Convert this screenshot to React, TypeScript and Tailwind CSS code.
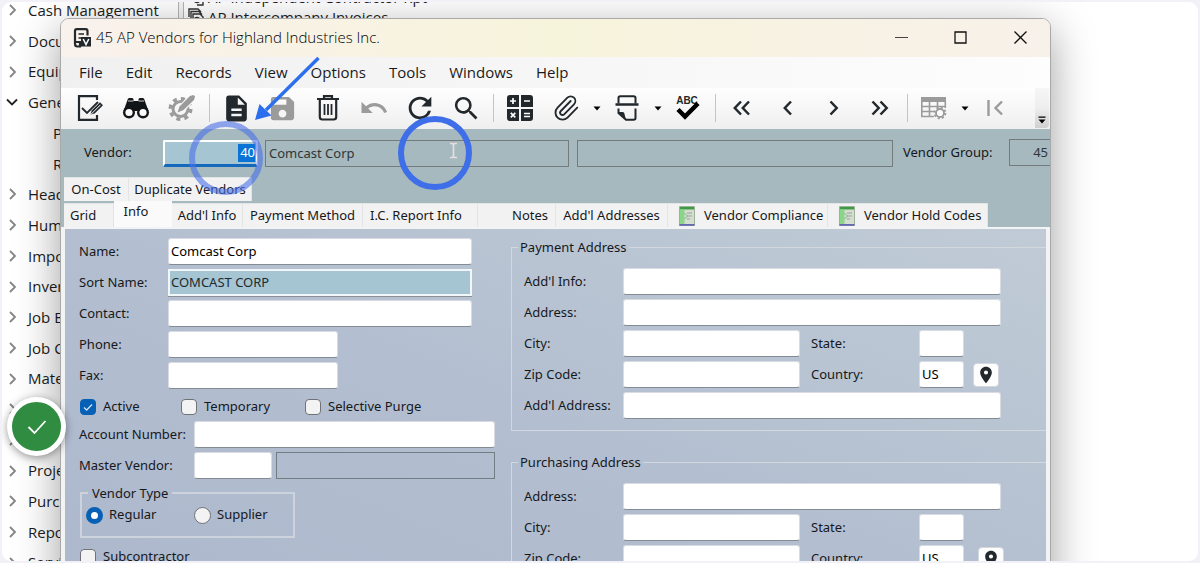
import React from 'react';
import { Paperclip } from 'lucide-react';
import {
  MdDescription,
  MdLocationOn,
  MdRefresh,
  MdSave,
  MdSearch,
  MdUndo,
} from 'react-icons/md';

const INK = '#22282b';
const MUTED = '#9b9b9b';

/* ---------- toolbar drawings ---------- */

const EditIcon = () => (
  <svg width="28" height="28" viewBox="0 0 28 28" fill="none" stroke={INK}>
    <path d="M21 6V2.200H3V25.800H21V21" strokeWidth="2.200" />
    <path d="M6 14l5 5L22 8" strokeWidth="1.800" />
    <path d="M14.500 20.500l1.200-4L24 8.200l3 3-8.300 8.200z" fill={INK} stroke="none" />
    <path d="M15 20.300l9.500-9.500" strokeWidth="1" stroke="#ffffff" />
  </svg>
);

const BinocularsIcon = () => (
  <svg width="28" height="24" viewBox="0 0 28 24" fill="#111517">
    <path d="M5.500 4q0-2 2-2H10q1.500 0 1.500 1.500V5h5V3.500Q16.500 2 18 2h2.500q2 0 2 2l4 11H1.500z" />
    <circle cx="7" cy="16.500" r="6" />
    <circle cx="21" cy="16.500" r="6" />
    <circle cx="7" cy="16.500" r="3.600" fill="#fafafa" />
    <circle cx="21" cy="16.500" r="3.600" fill="#fafafa" />
    <path d="M6 5h5.500M16.500 5H22" stroke="#fafafa" strokeWidth="0.800" />
  </svg>
);

const GearPencilIcon = () => (
  <svg width="28" height="28" viewBox="0 0 28 28" fill="none" stroke={MUTED}>
    <circle cx="12.500" cy="15" r="7.500" strokeWidth="3" />
    <circle cx="12.500" cy="15" r="10.300" strokeWidth="3.400" strokeDasharray="4.050 4.050" />
    <path d="M11 17l1.500-5.500L22.500 1.500l4 4L16.500 15.500z" fill="#f9f9f9" stroke="#f9f9f9" strokeWidth="2" />
    <path d="M9.500 18.500l2-6L22 2l3.500-1 1.500 1.500-1 3.500-10.500 10z" fill={MUTED} stroke="none" />
  </svg>
);

const TrashIcon = () => (
  <svg width="24" height="28" viewBox="0 0 24 28" fill="none" stroke={INK} strokeWidth="2.200">
    <path d="M1 5h22M8 4.500V2.200h8v2.300M3.800 5.500V23q0 2.500 2.500 2.500h11.400q2.500 0 2.500-2.500V5.500" />
    <path d="M8.500 10v11M12 10v11M15.500 10v11" strokeWidth="1.800" />
  </svg>
);

const CalculatorIcon = () => (
  <svg width="28" height="28" viewBox="0 0 28 28">
    <path d="M4 1h9v12H1V4q0-3 3-3zM15 1h9q3 0 3 3v9H15zM1 15h12v12H4q-3 0-3-3zM15 15h12v9q0 3-3 3h-9z" fill={INK} />
    <path d="M7 4v6M4 7h6M18 7h6M4.800 18.800l4.500 4.500M9.300 18.800l-4.500 4.500M18 19.500h6M18 22.500h6" stroke="#fff" strokeWidth="1.700" />
  </svg>
);

const PrintIcon = () => (
  <svg width="26" height="28" viewBox="0 0 26 28" fill="none" stroke={INK} strokeWidth="2">
    <path d="M4.500 9.500V4q0-1.800 1.800-1.800h13.400q1.800 0 1.800 1.800v5.500" />
    <path d="M1.500 10.500h23" strokeWidth="2.600" />
    <path d="M21.500 14.500V24q0 1.800-1.800 1.800H12L4.500 19V14.500" />
    <path d="M4 18h4.500q2 0 2 2l1.500 6z" fill={INK} stroke="none" />
  </svg>
);

const SpellIcon = () => (
  <svg width="26" height="28" viewBox="0 0 26 28">
    <text x="12" y="9.500" textAnchor="middle" fontFamily="Liberation Sans, sans-serif" fontWeight="700" fontSize="10" fill={INK}>
      ABC
    </text>
    <path d="M3 15.500l7 7L23 9.500" stroke="#000" strokeWidth="4.500" fill="none" />
  </svg>
);

const Chevrons = ({ dir, double = false }: { dir: 'left' | 'right'; double?: boolean }) => {
  const one = dir === 'left' ? 'M8 1.500L1.800 8L8 14.500' : 'M1.500 1.500L7.700 8L1.500 14.500';
  const two = dir === 'left' ? 'M16 1.500L9.800 8L16 14.500' : 'M9.500 1.500L15.700 8L9.500 14.500';
  return (
    <svg width={double ? 18 : 10} height="16" viewBox={double ? '0 0 18 16' : '0 0 10 16'} fill="none" stroke={INK} strokeWidth="2.500">
      <path d={one} />
      {double && <path d={two} />}
    </svg>
  );
};

const TableGearIcon = () => (
  <svg width="28" height="24" viewBox="0 0 28 24" fill="none" stroke={MUTED} strokeWidth="1.600">
    <path d="M1 1h25v5H1z" fill={MUTED} stroke="none" />
    <path d="M1.800 5v15.500H14M1.800 10.500H26M1.800 15.500H14M9.500 5v15.500M17.500 5v7M25.300 5v7" />
    <circle cx="20" cy="17" r="4" strokeWidth="1.800" fill="#fbfbfb" />
    <circle cx="20" cy="17" r="5.400" strokeWidth="1.800" strokeDasharray="2.120 2.120" />
  </svg>
);

const FirstIcon = () => (
  <svg width="18" height="16" viewBox="0 0 18 16" fill="none" stroke={MUTED} strokeWidth="2.400">
    <path d="M2.500 0v16M16 1.500L9.500 8L16 14.500" />
  </svg>
);

const AppIcon = () => (
  <svg width="18" height="20" viewBox="0 0 18 20" fill="none" stroke={INK} strokeWidth="2.200">
    <path d="M14.500 7.500V3q0-1.800-1.800-1.800H3.800Q2 1.200 2 3V16q0 2.500 2.500 2.500H7V14H3" />
    <path d="M5.500 6h5.500M5.500 10H8" strokeWidth="1.600" />
    <path d="M8 9h10V18.500H8z" fill={INK} stroke="none" />
    <path d="M10.200 11l2.800 5.500L15.800 11" stroke="#fff" strokeWidth="1.500" />
  </svg>
);

const ReportIcon = () => (
  <svg width="16" height="20" viewBox="0 0 16 20">
    <path d="M0.500 0.500h15v19H0.500z" fill="#d5ddd3" stroke="#9cb09a" />
    <path d="M1 1h14v2.500H1z" fill="#3f9a45" />
    <path d="M1 3.500h4.500V18H1z" fill="#8bd58b" />
    <path d="M8 7h5M8 10h5M8 13h3" stroke="#9aa69a" strokeWidth="1.200" />
    <path d="M5.500 7l3 3-3 3" stroke="#7fb57f" fill="none" />
    <path d="M0.500 18h15v1.800H0.500z" fill="#6566b5" />
  </svg>
);

/* ---------- toolbar parts ---------- */

const Tool = ({ label, children }: { label: string; children: React.ReactNode }) => (
  <button type="button" aria-label={label} className="flex h-10 w-[46px] shrink-0 items-center justify-center">
    {children}
  </button>
);

const Caret = ({ label }: { label: string }) => (
  <button type="button" aria-label={label} className="flex h-10 w-[15px] shrink-0 items-center justify-center">
    <svg width="8" height="5" viewBox="0 0 8 5">
      <path d="M0.500 0.500h7L4 4.500z" fill="#000" />
    </svg>
  </button>
);

const Separator = () => (
  <span className="flex h-10 w-2 shrink-0 items-center justify-center">
    <span className="h-7 w-px bg-[#c4c4c4]" />
  </span>
);

/* ---------- form parts ---------- */

const box =
  'h-[27px] min-w-0 rounded-[3px] border border-[#d8dce2] border-b-[#858b92] bg-white px-0.5 pb-0.5 text-black outline-none';

const LeftField = ({ id, label, value = '', width }: { id: string; label: string; value?: string; width: string }) => (
  <div className="flex items-center">
    <label htmlFor={id} className="w-[89px] shrink-0">
      {label}
    </label>
    <input id={id} defaultValue={value} className={`${box} ${width}`} />
  </div>
);

const AddressLine = ({ id, label }: { id: string; label: string }) => (
  <div className="flex items-center">
    <label htmlFor={id} className="w-[99px] shrink-0">
      {label}
    </label>
    <input id={id} className={`${box} flex-1`} />
  </div>
);

const SplitLine = ({
  id,
  label,
  sideLabel,
  sideValue = '',
  pin,
}: {
  id: string;
  label: string;
  sideLabel: string;
  sideValue?: string;
  pin?: string;
}) => (
  <div className="flex items-center">
    <label htmlFor={id} className="w-[99px] shrink-0">
      {label}
    </label>
    <input id={id} className={`${box} flex-1`} />
    <label htmlFor={`${id}-side`} className="ml-[11px] w-[108px] shrink-0">
      {sideLabel}
    </label>
    <input id={`${id}-side`} defaultValue={sideValue} className={`${box} w-[45px] shrink-0`} />
    <span className="flex w-[37px] shrink-0">
      {pin && (
        <button
          type="button"
          aria-label="Show on map"
          className={`flex h-6 w-[26px] shrink-0 items-center justify-center rounded-[4px] border border-[#d4d8de] bg-[#fdfdfd] ${pin}`}
        >
          <MdLocationOn size={20} color={INK} className="shrink-0" />
        </button>
      )}
    </span>
  </div>
);

const Check = ({ label, checked = false }: { label: string; checked?: boolean }) => (
  <label className="flex items-center gap-[7px]">
    <span className="grid h-4 w-4 shrink-0">
      <input
        type="checkbox"
        defaultChecked={checked}
        className="peer col-start-1 row-start-1 h-4 w-4 appearance-none rounded-[4px] border border-[#6f7276] bg-[#f3f3f3] checked:border-[#0560b6] checked:bg-[#0560b6]"
      />
      <svg
        viewBox="0 0 16 16"
        className="pointer-events-none col-start-1 row-start-1 hidden h-4 w-4 peer-checked:block"
        fill="none"
        stroke="#cfe2f4"
        strokeWidth="1.300"
      >
        <path d="M4 8.500l2.700 2.500L12 5.500" />
      </svg>
    </span>
    {label}
  </label>
);

const Radio = ({ label, checked = false }: { label: string; checked?: boolean }) => (
  <label className="flex items-center gap-[6px]">
    <input
      type="radio"
      name="vendor-type"
      defaultChecked={checked}
      className="h-[17px] w-[17px] shrink-0 appearance-none rounded-full border border-[#6f7276] bg-[#f3f3f3] checked:border-[5px] checked:border-[#0560b6] checked:bg-white"
    />
    {label}
  </label>
);

const AddressGroup = ({ title, className, children }: { title: string; className: string; children: React.ReactNode }) => (
  <fieldset
    className={`flex min-w-0 flex-col border border-r-0 border-[#d3d8de] pr-[45px] pb-[11px] pl-3 ${className}`}
  >
    <legend className="-ml-1.5 h-4 px-0.5 leading-4">{title}</legend>
    <div className="flex flex-col gap-1 pt-[13px]">{children}</div>
  </fieldset>
);

const Tab = ({ label, className, icon = false }: { label: string; className: string; icon?: boolean }) => (
  <button
    type="button"
    role="tab"
    className={`flex h-6 shrink-0 items-center border-t border-r border-[#e2e4e5] bg-[#f2f2f2] whitespace-nowrap ${className}`}
  >
    {icon && (
      <span className="mr-[9px]">
        <ReportIcon />
      </span>
    )}
    {label}
  </button>
);

/* ---------- module tree ---------- */

const modules: { name: string; kind?: 'open' | 'child' }[] = [
  { name: 'Cash Management' },
  { name: 'Docu' },
  { name: 'Equip' },
  { name: 'Gene', kind: 'open' },
  { name: 'P', kind: 'child' },
  { name: 'R', kind: 'child' },
  { name: 'Head' },
  { name: 'Hum' },
  { name: 'Impo' },
  { name: 'Inver' },
  { name: 'Job E' },
  { name: 'Job C' },
  { name: 'Mate' },
  { name: '' },
  { name: '' },
  { name: 'Proje' },
  { name: 'Purc' },
  { name: 'Repo' },
  { name: 'Servi' },
];

const ModuleTree = () => (
  <ul className="-mt-[7px] flex h-[calc(100vh+20px)] w-[176px] shrink-0 flex-col">
    {modules.map((m, i) => (
      <li key={i} className={`flex flex-1 items-center ${m.kind === 'child' ? 'pl-[51px]' : 'pl-1'}`}>
        {m.kind !== 'child' && (
          <svg width="12" height="12" viewBox="0 0 12 12" fill="none" strokeWidth="1.800" className="mr-2.5">
            {m.kind === 'open' ? (
              <path d="M1 3.500L6 8.500L11 3.500" stroke="#222" />
            ) : (
              <path d="M4 1L9 6L4 11" stroke="#858585" />
            )}
          </svg>
        )}
        {m.name}
      </li>
    ))}
  </ul>
);

const FormIcon = () => (
  <svg width="16" height="18" viewBox="0 0 16 18" fill="none" stroke="#333" strokeWidth="1.400">
    <path d="M1 9V1h9l3 3M3 11V3.500h8l3 3M5 13V6h7l3 3v8H9" />
    <circle cx="9" cy="12" r="2.500" />
  </svg>
);

/* ---------- window ---------- */

const menus = ['File', 'Edit', 'Records', 'View', 'Options', 'Tools', 'Windows', 'Help'];

const VendorWindow = () => (
  <section className="absolute top-[16px] right-[147px] bottom-[-60px] left-[58px] flex flex-col overflow-hidden rounded-t-[9px] border border-[#a9a9a9] bg-[#f4f4f4] shadow-[0_12px_44px_rgba(0,0,0,0.38)]">
    <header className="flex h-[38px] shrink-0 items-center bg-linear-to-r from-[#f9f1ec] via-[#f7f4dc] to-[#f8f1ea] pl-3 text-black">
      <AppIcon />
      <h1 className="ml-[5px] flex-1 pb-0.5 font-light">45 AP Vendors for Highland Industries Inc.</h1>
      <div className="flex pr-[5px] pb-0.5">
        <button type="button" aria-label="Minimize" className="flex h-9 w-[49px] items-center justify-center">
          <svg width="13" height="13" viewBox="0 0 13 13" stroke="#444">
            <path d="M0 6.500h13" />
          </svg>
        </button>
        <button type="button" aria-label="Maximize" className="ml-[10px] flex h-9 w-[49px] items-center justify-center">
          <svg width="13" height="13" viewBox="0 0 13 13" stroke="#111" fill="none" strokeWidth="1.300">
            <path d="M1 1h11v11H1z" />
          </svg>
        </button>
        <button type="button" aria-label="Close" className="ml-[11px] flex h-9 w-[49px] items-center justify-center">
          <svg width="13" height="13" viewBox="0 0 13 13" stroke="#111" strokeWidth="1.300">
            <path d="M0.500 0.500l12 12M12.500 0.500l-12 12" />
          </svg>
        </button>
      </div>
    </header>

    <nav className="flex h-[31px] shrink-0 items-center gap-[23px] bg-linear-to-r from-[#f0f0f0] to-[#fdfdfd] pl-[18px] text-[#1a1a1a]">
      {menus.map((m) => (
        <button key={m} type="button">
          {m}
        </button>
      ))}
    </nav>

    <div role="toolbar" className="flex h-[41px] shrink-0 bg-linear-to-b from-[#fefefe] to-[#efefef] pl-1.5">
      <Tool label="Edit record"><EditIcon /></Tool>
      <Tool label="Find"><BinocularsIcon /></Tool>
      <Tool label="Configure"><GearPencilIcon /></Tool>
      <Separator />
      <Tool label="New"><MdDescription size={31} color={INK} /></Tool>
      <Tool label="Save"><MdSave size={31} color={MUTED} /></Tool>
      <Tool label="Delete"><TrashIcon /></Tool>
      <Tool label="Undo"><MdUndo size={30} color={MUTED} /></Tool>
      <Tool label="Refresh"><MdRefresh size={34} color={INK} /></Tool>
      <Tool label="Search"><MdSearch size={31} color={INK} /></Tool>
      <Separator />
      <Tool label="Calculator"><CalculatorIcon /></Tool>
      <Tool label="Attach"><Paperclip size={28} color={INK} strokeWidth={1.6} /></Tool>
      <Caret label="Attach options" />
      <Tool label="Print"><PrintIcon /></Tool>
      <Caret label="Print options" />
      <Tool label="Spelling"><SpellIcon /></Tool>
      <Separator />
      <Tool label="First"><Chevrons dir="left" double /></Tool>
      <Tool label="Previous"><Chevrons dir="left" /></Tool>
      <Tool label="Next"><Chevrons dir="right" /></Tool>
      <Tool label="Last"><Chevrons dir="right" double /></Tool>
      <Separator />
      <Tool label="Grid settings"><TableGearIcon /></Tool>
      <Caret label="Grid options" />
      <Tool label="Go to start"><FirstIcon /></Tool>
      <button
        type="button"
        aria-label="More tools"
        className="mr-px ml-auto flex h-10 w-[14px] items-end justify-center rounded-br-[4px] bg-linear-to-b from-[#f6f6f6] via-[#eeeeee] to-[#cfcfcf] pb-1"
      >
        <svg width="8" height="8" viewBox="0 0 8 8">
          <path d="M0.500 0.500h7v1.200h-7zM0.500 3.500h7L4 7.500z" fill="#000" />
        </svg>
      </button>
    </div>

    <div className="flex min-h-0 flex-1 flex-col bg-[#a5b9be] font-['Noto_Sans',sans-serif] text-[13px] text-[#16181c]">
      <div className="flex h-12 shrink-0 items-center pl-[23px]">
        <label htmlFor="vendor" className="w-[79px] shrink-0">
          Vendor:
        </label>
        <span className="flex h-[27px] w-[95px] shrink-0 items-center justify-end rounded-[2px] border-2 border-b-[3px] border-white border-b-[#1569bd] bg-[#a5c5d3]">
          <input
            id="vendor"
            defaultValue="40"
            className="h-[18px] w-[17px] bg-[#0a74d6] text-right text-white outline-none"
          />
          <span className="h-[18px] w-px bg-[#e8894a]" />
        </span>
        <input
          aria-label="Vendor name"
          readOnly
          defaultValue="Comcast Corp"
          className="ml-[7px] h-[27px] min-w-0 flex-[296] border border-[#737b7d] px-[3px] text-[#303638] outline-none"
        />
        <input
          aria-label="Vendor details"
          readOnly
          className="ml-2 h-[27px] min-w-0 flex-[313] border border-[#737b7d] outline-none"
        />
        <label htmlFor="vendor-group" className="ml-[10px] w-[106px] shrink-0">
          Vendor Group:
        </label>
        <input
          id="vendor-group"
          readOnly
          defaultValue="45"
          className="mb-0.5 h-[27px] w-[41px] shrink-0 border border-r-0 border-[#737b7d] pr-0.5 text-right text-[#303638] outline-none"
        />
      </div>

      <div role="tablist" className="flex shrink-0 pl-[3px]">
        <Tab label="On-Cost" className="w-[65px] justify-center" />
        <Tab label="Duplicate Vendors" className="w-[123px] justify-center" />
      </div>
      <div role="tablist" className="flex shrink-0 items-end pl-[3px]">
        <Tab label="Grid" className="w-[50px] pl-1.5" />
        <button
          type="button"
          role="tab"
          aria-selected="true"
          className="h-[26px] w-[58px] shrink-0 bg-[#fafafa] pr-3.5 pb-1 text-center"
        >
          Info
        </button>
        <Tab label="Add'l Info" className="w-[71px] justify-center" />
        <Tab label="Payment Method" className="w-[120px] justify-center" />
        <Tab label="I.C. Report Info" className="w-[115px] pl-[7px]" />
        <Tab label="Notes" className="w-[78px] justify-end pr-[7px]" />
        <Tab label="Add'l Addresses" className="w-[112px] justify-center" />
        <Tab label="Vendor Compliance" icon className="w-[160px] pl-[11px]" />
        <Tab label="Vendor Hold Codes" icon className="w-[160px] pl-[11px]" />
      </div>

      <form className="flex min-h-0 flex-1 border-x-4 border-t-2 border-[#f2f3f4] bg-linear-to-tr from-[#acb7cc] via-[#b3bfd0] to-[#c0cbd6] pl-3.5">
        <div className="flex w-[416px] shrink-0 flex-col pt-[9px]">
          <div className="flex flex-col gap-1">
            <LeftField id="name" label="Name:" value="Comcast Corp" width="w-[304px]" />
            <div className="flex items-center">
              <label htmlFor="sort-name" className="w-[89px] shrink-0">
                Sort Name:
              </label>
              <input
                id="sort-name"
                defaultValue="COMCAST CORP"
                className="h-[27px] w-[304px] border-2 border-[#f3f6f8] bg-[#a5c5d3] px-px pb-0.5 text-[#222a30] shadow-[0_1px_0_#8a9096] outline-none"
              />
            </div>
            <LeftField id="contact" label="Contact:" width="w-[304px]" />
            <LeftField id="phone" label="Phone:" width="w-[170px]" />
            <LeftField id="fax" label="Fax:" width="w-[170px]" />
          </div>

          <div className="mt-2.5 mb-1.5 flex h-4 items-center pl-px">
            <span className="w-[101px] shrink-0"><Check label="Active" checked /></span>
            <span className="w-[124px] shrink-0"><Check label="Temporary" /></span>
            <Check label="Selective Purge" />
          </div>

          <div className="flex flex-col gap-1">
            <div className="flex items-center">
              <label htmlFor="account" className="w-[115px] shrink-0 whitespace-nowrap">
                Account Number:
              </label>
              <input id="account" className={`${box} flex-1`} />
            </div>
            <div className="flex items-center">
              <label htmlFor="master" className="w-[115px] shrink-0">
                Master Vendor:
              </label>
              <input id="master" className={`${box} w-[78px]`} />
              <input
                aria-label="Master vendor name"
                readOnly
                className="ml-1 h-[27px] min-w-0 flex-1 border border-[#737b83] outline-none"
              />
            </div>
          </div>

          <fieldset className="mt-1.5 ml-px h-[53px] w-[215px] border-2 border-[#ccd3dc] pl-1">
            <legend className="ml-0.5 h-4 px-1 leading-4">Vendor Type</legend>
            <div className="flex h-7 items-center">
              <span className="w-[108px]"><Radio label="Regular" checked /></span>
              <Radio label="Supplier" />
            </div>
          </fieldset>

          <div className="mt-[9px] pl-px">
            <Check label="Subcontractor" />
          </div>
        </div>

        <div className="ml-4 flex min-w-0 flex-1 flex-col">
          <AddressGroup title="Payment Address" className="mt-2.5">
            <AddressLine id="pay-info" label="Add'l Info:" />
            <AddressLine id="pay-address" label="Address:" />
            <SplitLine id="pay-city" label="City:" sideLabel="State:" />
            <SplitLine id="pay-zip" label="Zip Code:" sideLabel="Country:" sideValue="US" pin="ml-[9px]" />
            <AddressLine id="pay-extra" label="Add'l Address:" />
          </AddressGroup>
          <AddressGroup title="Purchasing Address" className="mt-[23px]">
            <AddressLine id="buy-address" label="Address:" />
            <SplitLine id="buy-city" label="City:" sideLabel="State:" />
            <SplitLine id="buy-zip" label="Zip Code:" sideLabel="Country:" sideValue="US" pin="ml-[14px]" />
            <AddressLine id="buy-extra" label="Add'l Address:" />
          </AddressGroup>
        </div>
      </form>
    </div>
  </section>
);

export default function App() {
  return (
    <div className="h-screen bg-[#f1f1f7] p-0.5 font-['Open_Sans','Noto_Sans',sans-serif] text-[15px] text-[#1c1c1c]">
      <main className="relative flex h-full items-start overflow-hidden rounded-[9px] bg-white">
        <ModuleTree />
        <div className="h-full w-1.5 shrink-0 border-x border-[#b5b5b5] bg-[#f4f4f4]" />
        <ul className="-mt-[15px] pl-1 leading-5">
          <li className="flex items-center gap-1">
            <FormIcon />
            AP Independent Contractor Rpt
          </li>
          <li className="flex items-center gap-1">
            <FormIcon />
            AP Intercompany Invoices
          </li>
        </ul>

        <VendorWindow />

        <div className="absolute top-[119px] left-[187px] h-[74px] w-[74px] rounded-full border-[6px] border-[#4a6fe8]/60" />
        <div className="absolute top-[114px] left-[396px] h-[74px] w-[74px] rounded-full border-[6px] border-[#3f6fe8]" />
        <svg className="absolute top-[52px] left-[250px]" width="70" height="70" viewBox="0 0 70 70">
          <path d="M66.500 4L14 56" stroke="#2b6fee" strokeWidth="3.400" />
          <path d="M3 66L7.500 50L19.500 61.500z" fill="#2b6fee" />
        </svg>
        <svg className="absolute top-[140px] left-[447px]" width="9" height="17" viewBox="0 0 9 17" fill="none" stroke="#e6e0e0" strokeWidth="1.600">
          <path d="M1 1.500h2.500l1 1 1-1H8M4.500 2v13M1 15.500h2.500l1-1 1 1H8" />
        </svg>
        <button
          type="button"
          aria-label="Step complete"
          className="absolute top-[395px] left-[5px] flex h-[59px] w-[59px] items-center justify-center rounded-full border-[5px] border-white bg-[#2f8c40] shadow-[0_2px_8px_rgba(0,0,0,0.4)]"
        >
          <svg width="20" height="16" viewBox="0 0 20 16" fill="none" stroke="#fff" strokeWidth="1.800">
            <path d="M1.500 8l6 6L18.500 2" />
          </svg>
        </button>
      </main>
    </div>
  );
}
